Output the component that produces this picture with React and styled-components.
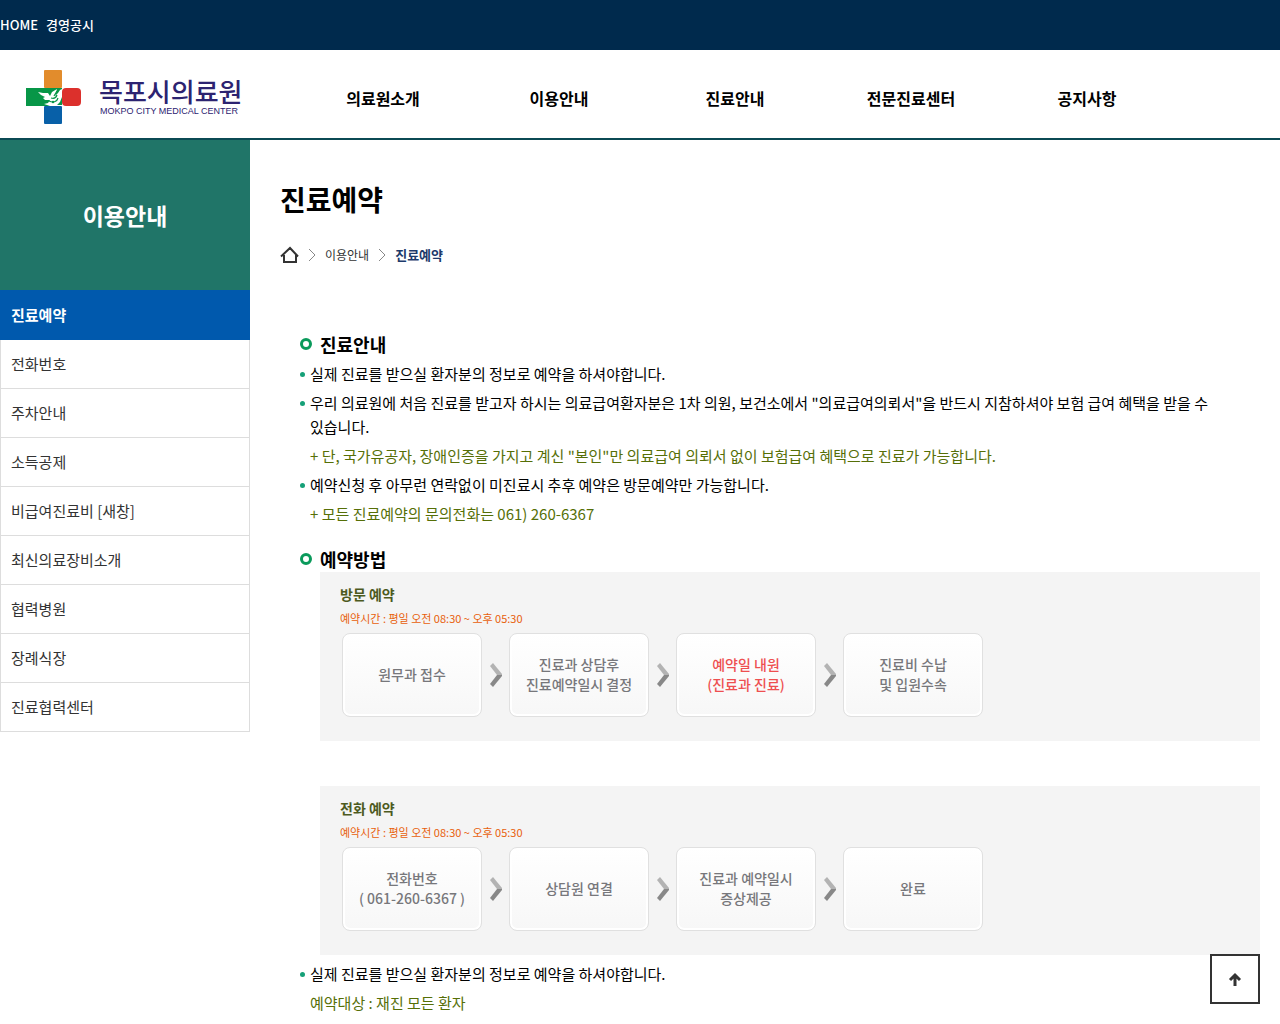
import React from "react";
import styled, { createGlobalStyle, css } from "styled-components";

const GlobalStyle = createGlobalStyle`
  *,
  *::before {
    box-sizing: border-box;
  }
  body {
    margin: 0;
    background: #ffffff;
    color: #000000;
    font-family: "Noto Sans CJK KR", sans-serif;
    font-size: 15px;
    line-height: 24px;
    word-break: keep-all;
  }
  h1, h2, h3, p, ul, ol {
    margin: 0;
    padding: 0;
  }
  ul, ol {
    list-style: none;
  }
  a {
    color: inherit;
    text-decoration: none;
  }
`;

const TopBar = styled.div`
  display: flex;
  align-items: center;
  gap: 8px;
  height: 50px;
  background: #002a4d;
  color: #ffffff;
  font-size: 13px;
  font-weight: 500;
`;

const Header = styled.header`
  display: flex;
  align-items: center;
  height: 90px;
  border-bottom: 2px solid #0b4a54;
`;

const Logo = styled.a`
  display: flex;
  flex: 0 0 295px;
  align-items: center;
  gap: 18px;
  padding: 6px 0 0 26px;
`;

const LogoText = styled.span`
  display: flex;
  flex-direction: column;
  color: #2c2371;
  white-space: nowrap;
`;

const LogoKorean = styled.span`
  font-size: 26px;
  font-weight: 500;
  line-height: 28px;
`;

const LogoEnglish = styled.span`
  padding-left: 1px;
  font-family: "Liberation Sans", sans-serif;
  font-size: 9px;
  line-height: 12px;
`;

const Nav = styled.nav`
  display: grid;
  flex: 1;
  grid-template-columns: repeat(5, 1fr);
  max-width: 880px;
  padding-top: 8px;
  font-size: 16px;
  font-weight: 700;
  text-align: center;
`;

const Body = styled.div`
  display: flex;
  align-items: flex-start;
`;

const Sidebar = styled.aside`
  flex: 0 0 250px;
`;

const SideTitle = styled.h2`
  display: flex;
  align-items: center;
  justify-content: center;
  height: 150px;
  background: #207568;
  color: #ffffff;
  font-size: 23px;
  font-weight: 700;
`;

const SideLink = styled.a`
  display: block;
  padding: 12px 10px;
  border: 1px solid #dddddd;
  border-top: 0;
  color: #333333;
  ${(props) =>
    props.$active &&
    css`
      padding: 13px 11px;
      border: 0;
      background: #0059ad;
      color: #ffffff;
      font-weight: 700;
    `}
`;

const Main = styled.main`
  flex: 1;
  min-width: 0;
  padding: 39px 20px 0 30px;
`;

const Title = styled.h1`
  font-size: 28px;
  font-weight: 700;
  line-height: 40px;
`;

const Breadcrumb = styled.nav`
  display: flex;
  align-items: center;
  gap: 9px;
  margin: 26px 0 66px;
  color: #333333;
  font-size: 12px;
  line-height: 20px;
`;

const Current = styled.span`
  color: #1d3a6b;
  font-size: 13px;
  font-weight: 700;
`;

const Section = styled.section`
  padding-left: 20px;
  margin-bottom: 20px;
`;

const SectionTitle = styled.h2`
  display: flex;
  align-items: center;
  gap: 8px;
  font-size: 18px;
  font-weight: 700;
  line-height: 26px;

  &::before {
    content: "";
    width: 12px;
    height: 12px;
    border: 3px solid #0a9a5b;
    border-radius: 50%;
  }
`;

const Item = styled.li`
  position: relative;
  margin-top: 5px;
  padding-left: 10px;
  color: ${(props) => (props.$note ? "#566f07" : "#000000")};

  &::before {
    content: "";
    display: ${(props) => (props.$note ? "none" : "block")};
    position: absolute;
    top: 10px;
    left: 0;
    width: 5px;
    height: 5px;
    border-radius: 50%;
    background: #16a078;
  }
`;

const Panel = styled.div`
  margin: 0 0 45px 20px;
  padding: 10px 20px 24px;
  background: #f4f4f4;

  &:last-of-type {
    margin-bottom: 7px;
  }
`;

const PanelTitle = styled.h3`
  color: #4d5a1e;
  font-size: 14px;
  font-weight: 700;
`;

const PanelTime = styled.p`
  color: #e8600b;
  font-size: 11px;
`;

const Steps = styled.ol`
  display: flex;
  margin: 3px 0 0 2px;
`;

const StepItem = styled.li`
  display: flex;
  align-items: center;
`;

const StepCard = styled.span`
  display: flex;
  align-items: center;
  justify-content: center;
  width: 140px;
  height: 84px;
  padding-bottom: 2px;
  border: 1px solid #e0e0e0;
  border-radius: 8px;
  background: linear-gradient(#ffffff, #f7f7f7);
  box-shadow: inset 0 0 0 2px #ffffff;
  color: ${(props) => (props.$highlight ? "#ee4f50" : "#77777b")};
  font-size: 14px;
  font-weight: 500;
  line-height: 20px;
  text-align: center;
  white-space: pre-line;
`;

const StepArrow = styled.svg`
  width: 13px;
  height: 24px;
  margin: 0 7px;
`;

const TopButton = styled.button`
  position: fixed;
  right: 20px;
  bottom: 20px;
  display: flex;
  align-items: center;
  justify-content: center;
  width: 50px;
  height: 50px;
  padding: 0;
  border: 2px solid #333333;
  background: #ffffff;
  cursor: pointer;
`;

const menus = ["의료원소개", "이용안내", "진료안내", "전문진료센터", "공지사항"];

const sideMenus = [
  "진료예약",
  "전화번호",
  "주차안내",
  "소득공제",
  "비급여진료비 [새창]",
  "최신의료장비소개",
  "협력병원",
  "장례식장",
  "진료협력센터",
];

const visitSteps = [
  { text: "원무과 접수" },
  { text: "진료과 상담후\n진료예약일시 결정" },
  { text: "예약일 내원\n(진료과 진료)", highlight: true },
  { text: "진료비 수납\n및 입원수속" },
];

const phoneSteps = [
  { text: "전화번호\n( 061-260-6367 )" },
  { text: "상담원 연결" },
  { text: "진료과 예약일시\n증상제공" },
  { text: "완료" },
];

const LogoMark = () => (
  <svg width="55" height="54" viewBox="0 0 55 54" aria-hidden="true">
    <rect x="18" y="0" width="18" height="18" rx="1" fill="#e28c2c" />
    <rect x="0" y="18" width="36" height="18" fill="#079647" />
    <rect x="36" y="18" width="19" height="18" rx="4" fill="#dc302c" />
    <rect x="18" y="36" width="18" height="18" rx="1" fill="#0860a8" />
    <path
      d="M12 22l5 1 5 0 2 3 2-4 5-3-1 4-1 3 3-3 2-3 2-1v8l-2 5-3 3h5v1H24l-6-2 4-1 2-3-5 0-2-2 2-1-4-2z"
      fill="#ffffff"
    />
    <path
      d="M25 28c3 1 5 0 6-3M23 31c4 2 8 1 9-3M31 21l-3 5"
      fill="none"
      stroke="#079647"
      strokeWidth="1.2"
    />
    <circle cx="27" cy="32" r="1.2" fill="#079647" />
  </svg>
);

const HomeIcon = () => (
  <svg width="19" height="18" viewBox="0 0 19 18" role="img" aria-label="홈">
    <path
      d="M1 10.5L10 2l8 8.500M4 9v7h12V9"
      fill="none"
      stroke="#333333"
      strokeWidth="2"
    />
  </svg>
);

const Separator = () => (
  <svg width="8" height="12" viewBox="0 0 8 12" aria-hidden="true">
    <path d="M1 0l6 6-6 6" fill="none" stroke="#888888" />
  </svg>
);

const Arrow = () => (
  <StepArrow viewBox="0 0 13 24" aria-hidden="true">
    <path d="M1 3l3-3 9 11v1H8z" fill="#b3b3b3" />
    <path d="M8 12h5v1L4 24l-3-3z" fill="#888888" />
  </StepArrow>
);

function Reservation({ title, steps }) {
  return (
    <Panel>
      <PanelTitle>{title}</PanelTitle>
      <PanelTime>예약시간 : 평일 오전 08:30 ~ 오후 05:30</PanelTime>
      <Steps>
        {steps.map((step, index) => (
          <StepItem key={step.text}>
            {index > 0 && <Arrow />}
            <StepCard $highlight={step.highlight}>{step.text}</StepCard>
          </StepItem>
        ))}
      </Steps>
    </Panel>
  );
}

export default function App() {
  return (
    <>
      <GlobalStyle />
      <TopBar>
        <a href="#home">HOME</a>
        <a href="#open">경영공시</a>
      </TopBar>
      <Header>
        <Logo href="#home">
          <LogoMark />
          <LogoText>
            <LogoKorean>목포시의료원</LogoKorean>
            <LogoEnglish>MOKPO CITY MEDICAL CENTER</LogoEnglish>
          </LogoText>
        </Logo>
        <Nav>
          {menus.map((menu) => (
            <a href="#menu" key={menu}>{menu}</a>
          ))}
        </Nav>
      </Header>
      <Body>
        <Sidebar>
          <SideTitle>이용안내</SideTitle>
          <ul>
            {sideMenus.map((menu, index) => (
              <li key={menu}>
                <SideLink href="#side" $active={index === 0}>{menu}</SideLink>
              </li>
            ))}
          </ul>
        </Sidebar>
        <Main>
          <Title>진료예약</Title>
          <Breadcrumb>
            <HomeIcon />
            <Separator />
            <span>이용안내</span>
            <Separator />
            <Current>진료예약</Current>
          </Breadcrumb>
          <Section>
            <SectionTitle>진료안내</SectionTitle>
            <ul>
              <Item>실제 진료를 받으실 환자분의 정보로 예약을 하셔야합니다.</Item>
              <Item>
                우리 의료원에 처음 진료를 받고자 하시는 의료급여환자분은 1차 의원, 보건소에서 "의료급여의뢰서"을 반드시 지참하셔야 보험 급여 혜택을 받을 수 있습니다.
              </Item>
              <Item $note>
                + 단, 국가유공자, 장애인증을 가지고 계신 "본인"만 의료급여 의뢰서 없이 보험급여 혜택으로 진료가 가능합니다.
              </Item>
              <Item>예약신청 후 아무런 연락없이 미진료시 추후 예약은 방문예약만 가능합니다.</Item>
              <Item $note>+ 모든 진료예약의 문의전화는 061) 260-6367</Item>
            </ul>
          </Section>
          <Section>
            <SectionTitle>예약방법</SectionTitle>
            <Reservation title="방문 예약" steps={visitSteps} />
            <Reservation title="전화 예약" steps={phoneSteps} />
            <ul>
              <Item>실제 진료를 받으실 환자분의 정보로 예약을 하셔야합니다.</Item>
              <Item $note>예약대상 : 재진 모든 환자</Item>
            </ul>
          </Section>
        </Main>
      </Body>
      <TopButton type="button" aria-label="맨 위로">
        <svg width="14" height="14" viewBox="0 0 14 14" aria-hidden="true">
          <path d="M7 14V3M2 8l5-5 5 5" fill="none" stroke="#333333" strokeWidth="3" />
        </svg>
      </TopButton>
    </>
  );
}
